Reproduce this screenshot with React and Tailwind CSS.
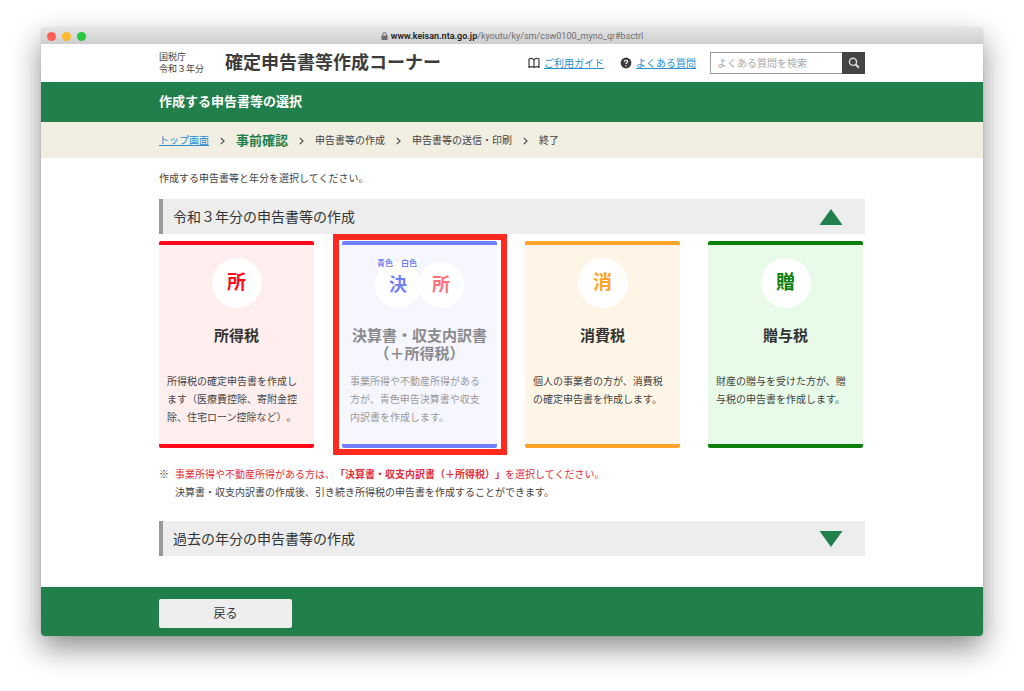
const steps = ['申告書等の作成', '申告書等の送信・印刷', '終了'];

const Container = ({ className = '', children }) => (
    <div className={`w-full max-w-[706px] mx-auto ${className}`}>{children}</div>
);

const LockIcon = () => (
    <svg className="w-[7px] h-2 mr-[3px]" viewBox="0 0 7 8" fill="none">
        <path d="M1.6 4V2.5a1.9 1.9 0 0 1 3.8 0V4" stroke="#6d6d6d" strokeWidth="1" />
        <rect x="0.5" y="3.6" width="6" height="4.4" rx="0.6" fill="#6d6d6d" />
    </svg>
);

const BookIcon = () => (
    <svg className="w-3 h-3" viewBox="0 0 12 12" fill="none" stroke="#3c3c3c" strokeWidth="1.2" strokeLinejoin="round">
        <path d="M6 2.8C4.8 1.4 2.400 1.300 1 2v8.400c1.600-.9 3.800-.8 5 .1 1.200-.9 3.400-1 5-.1V2C9.600 1.300 7.200 1.400 6 2.800z" />
        <path d="M6 2.800v7.700" />
    </svg>
);

const HelpIcon = () => (
    <svg className="w-3 h-3" viewBox="0 0 12 12" fill="none">
        <circle cx="6" cy="6" r="5.400" fill="#3c3c3c" />
        <path d="M4.400 4.800c0-2 3.200-2 3.200-.2 0 1.100-1.600 1.100-1.600 2.300" stroke="#fff" strokeWidth="1.200" />
        <circle cx="6" cy="8.700" r="0.700" fill="#fff" />
    </svg>
);

const SearchIcon = () => (
    <svg className="w-3 h-3" viewBox="0 0 12 12" fill="none" stroke="#dcdcdc">
        <circle cx="5" cy="4.800" r="3.600" strokeWidth="1.400" />
        <path d="M7.700 7.500 11 10.800" strokeWidth="2" />
    </svg>
);

const Chevron = () => (
    <svg className="w-[5px] h-2" viewBox="0 0 5 8" fill="none" stroke="#555" strokeWidth="1.300">
        <path d="M0.800 0.900 4 4 0.800 7.100" />
    </svg>
);

const SectionBar = ({ title, open }) => (
    <h2>
        <button
            type="button"
            aria-expanded={open}
            className="w-full h-[35px] flex items-center justify-between bg-[#ededed] border-l-4 border-[#999] pl-2.5 pr-[22px] text-sm text-[#333] text-left"
        >
            {title}
            <svg className="w-6 h-4" viewBox="0 0 24 16" fill="#217f4c">
                {open ? <path d="M12 0 23.500 16H0.500z" /> : <path d="M0.500 0h23L12 16z" />}
            </svg>
        </button>
    </h2>
);

const Circle = ({ className, children }) => (
    <span className={`w-[50px] h-[50px] rounded-full bg-white flex items-center justify-center text-[19px] font-bold ${className}`}>
        {children}
    </span>
);

const Card = ({ className, badge, title, text, highlighted }) => (
    <a href="#" className={`relative block h-[207px] border-y-4 rounded-xs px-2 ${className}`}>
        {highlighted && <span className="absolute -left-[9px] -right-2.5 -inset-y-[11px] border-6 border-[#ff2a1f]"></span>}
        <div className="h-[82px] pt-[13px] flex justify-center">{badge}</div>
        <h3 className={`h-[46px] text-[15px] leading-[18px] font-bold text-center whitespace-nowrap ${highlighted ? 'text-[#8b8b8e]' : 'text-[#333]'}`}>
            {title}
        </h3>
        <p className={`text-[10px] leading-[18px] ${highlighted ? 'text-[#999]' : 'text-[#444]'}`}>{text}</p>
    </a>
);

const SettlementBadge = () => (
    <span className="relative flex pt-1 text-[18px] font-bold">
        <span className="w-[46px] h-[46px] rounded-full bg-white text-[#7080f5] flex items-center justify-center">決</span>
        <span className="w-[46px] h-[46px] -ml-[3px] rounded-full bg-white text-[#ff7179] flex items-center justify-center">所</span>
        <span className="absolute top-0 left-0 flex gap-1 text-[8px] leading-3 text-[#7080f5]">
            <span className="bg-white rounded-full px-0.5">青色</span>
            <span className="bg-white rounded-full px-0.5">白色</span>
        </span>
    </span>
);

const App = () => {
    return (
        <div className="min-h-screen bg-white px-[41px] pt-7 pb-[55px] font-['Liberation_Sans','Noto_Sans_CJK_JP',sans-serif] [text-spacing-trim:space-all] text-[10px] text-[#444]">
            <div className="rounded-[4px] overflow-hidden shadow-[0_0_1px_rgba(0,0,0,0.4),0_12px_30px_rgba(0,0,0,0.45)]">
                <div className="h-4 grid grid-cols-[1fr_auto_1fr] items-center bg-linear-to-b from-[#e4e4e4] to-[#cecece]">
                    <div className="flex gap-1.5 pl-1.5">
                        <span className="w-[9px] h-[9px] rounded-full bg-[#ff5f57]"></span>
                        <span className="w-[9px] h-[9px] rounded-full bg-[#febb2e]"></span>
                        <span className="w-[9px] h-[9px] rounded-full bg-[#28c840]"></span>
                    </div>
                    <div className="flex items-center text-[9px] leading-4 font-[Roboto,sans-serif] text-[#6d6d6d]">
                        <LockIcon />
                        <span className="font-semibold text-[#222]">www.keisan.nta.go.jp</span>
                        <span>/kyoutu/ky/sm/csw0100_myno_qr#bsctrl</span>
                    </div>
                </div>

                <header className="bg-white">
                    <Container className="h-[38px] flex items-center">
                        <p className="w-[66px] text-[9px] leading-3">国税庁<br />令和３年分</p>
                        <h1 className="text-lg font-bold text-[#3c3c3c]">確定申告書等作成コーナー</h1>
                        <nav className="ml-auto flex items-center text-[#2b8fd0]">
                            <BookIcon />
                            <a href="#" className="ml-1 underline">ご利用ガイド</a>
                            <span className="ml-4 flex"><HelpIcon /></span>
                            <a href="#" className="ml-1 underline">よくある質問</a>
                        </nav>
                        <form className="ml-3.5 flex" onSubmit={(e) => e.preventDefault()}>
                            <input
                                type="text"
                                aria-label="よくある質問を検索"
                                placeholder="よくある質問を検索"
                                className="w-[132px] h-[22px] border border-r-0 border-[#999] px-1.5 placeholder:text-[#aaa]"
                            />
                            <button type="submit" aria-label="検索" className="w-[23px] h-[22px] bg-[#444] flex items-center justify-center">
                                <SearchIcon />
                            </button>
                        </form>
                    </Container>
                </header>

                <div className="bg-[#217f4c]">
                    <Container className="h-10 flex items-center text-[13px] font-bold text-white">作成する申告書等の選択</Container>
                </div>

                <nav className="bg-[#f1eee2]">
                    <Container className="h-9 pt-px flex items-center">
                        <a href="#" className="underline text-[#2b8fd0] mr-[11px]">トップ画面</a>
                        <Chevron />
                        <span className="mx-[11px] text-[13px] font-bold text-[#217f4c]">事前確認</span>
                        {steps.map((step) => (
                            <span key={step} className="flex items-center">
                                <Chevron />
                                <span className="mx-[11px]">{step}</span>
                            </span>
                        ))}
                    </Container>
                </nav>

                <main className="bg-white pb-[31px]">
                    <Container>
                        <p className="h-[41px] leading-[42px]">作成する申告書等と年分を選択してください。</p>
                        <SectionBar title="令和３年分の申告書等の作成" open />
                        <div className="grid grid-cols-4 gap-7 pt-[7px] pr-0.5">
                            <Card
                                className="bg-[#ffeeee] border-[#ff0a1a]"
                                badge={<Circle className="text-[#ff0a1a]">所</Circle>}
                                title="所得税"
                                text="所得税の確定申告書を作成します（医療費控除、寄附金控除、住宅ローン控除など）。"
                            />
                            <Card
                                highlighted
                                className="bg-[#f6f6ff] border-[#7080ff]"
                                badge={<SettlementBadge />}
                                title={<>決算書・収支内訳書<br />（＋所得税）</>}
                                text="事業所得や不動産所得がある方が、青色申告決算書や収支内訳書を作成します。"
                            />
                            <Card
                                className="bg-[#fff5e6] border-[#ffa429]"
                                badge={<Circle className="text-[#ffa429]">消</Circle>}
                                title="消費税"
                                text="個人の事業者の方が、消費税の確定申告書を作成します。"
                            />
                            <Card
                                className="bg-[#e8fbe8] border-[#0c800c]"
                                badge={<Circle className="text-[#0c800c]">贈</Circle>}
                                title="贈与税"
                                text="財産の贈与を受けた方が、贈与税の申告書を作成します。"
                            />
                        </div>
                        <div className="flex gap-1.5 pt-[18px] pb-[19px] leading-[18px]">
                            <span>※</span>
                            <p>
                                <span className="text-[#e03038]">
                                    事業所得や不動産所得がある方は、<strong>「決算書・収支内訳書（＋所得税）」</strong>を選択してください。
                                </span>
                                <br />
                                決算書・収支内訳書の作成後、引き続き所得税の申告書を作成することができます。
                            </p>
                        </div>
                        <SectionBar title="過去の年分の申告書等の作成" open={false} />
                    </Container>
                </main>

                <footer className="bg-[#217f4c]">
                    <Container className="pt-3 pb-2">
                        <button type="button" className="w-[133px] h-[29px] rounded-xs bg-[#eee] text-xs text-[#333]">戻る</button>
                    </Container>
                </footer>
            </div>
        </div>
    );
};

export default App;
